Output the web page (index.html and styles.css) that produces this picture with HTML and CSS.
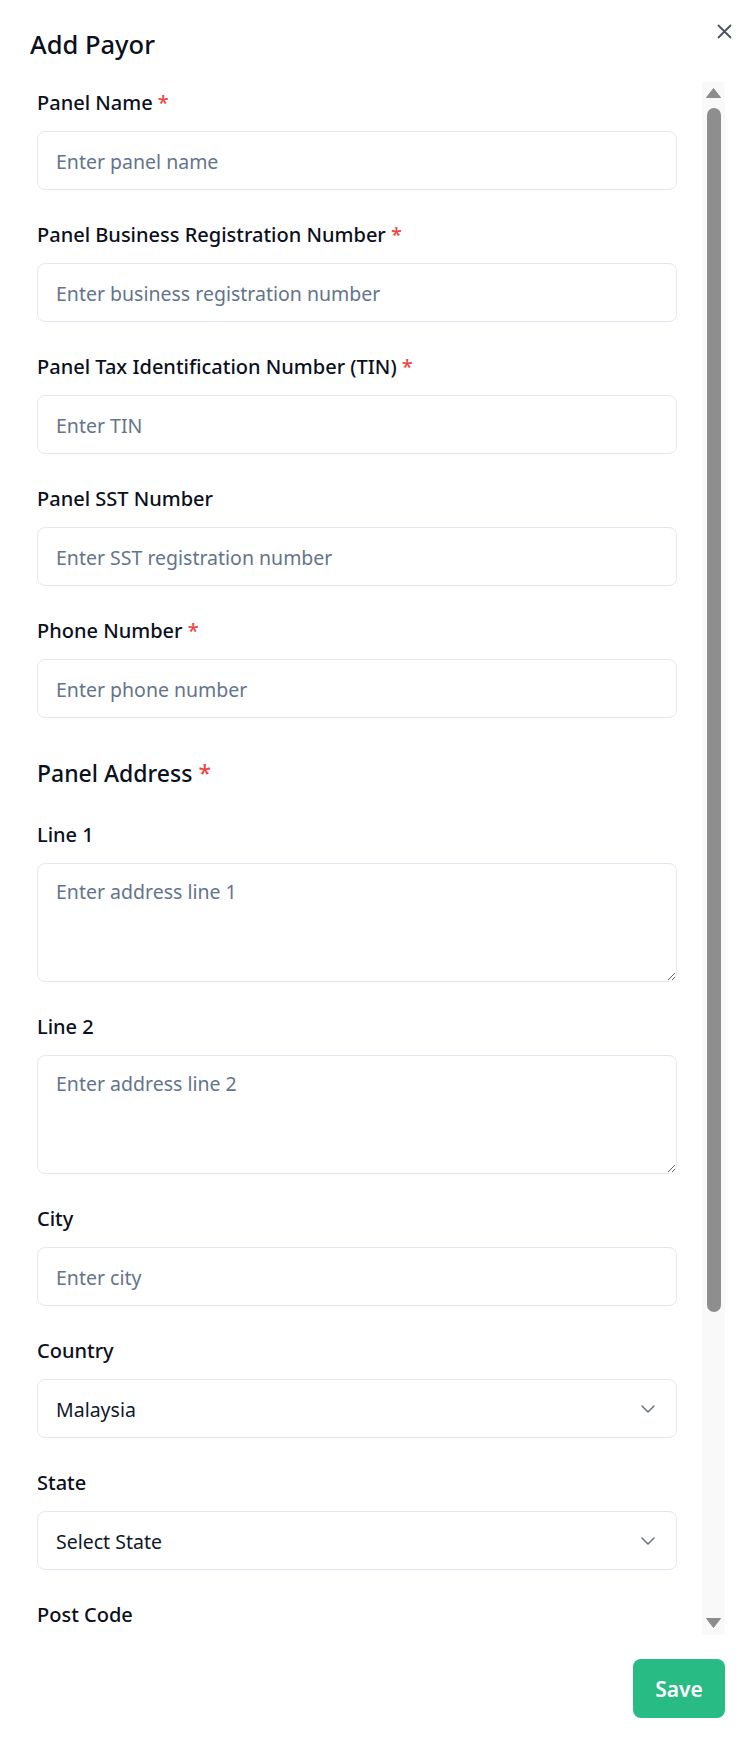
FILE: index.html
```html
<!DOCTYPE html>
<html lang="en">
<head>
<meta charset="utf-8">
<title>Add Payor</title>
<link rel="stylesheet" href="styles.css">
</head>
<body>
<div class="dialog">
  <div class="dialog-header">
    <h2 class="dialog-title">Add Payor</h2>
    <button class="close-btn" type="button" aria-label="Close">
      <svg width="15" height="15" viewBox="0 0 15 15"><path d="M1.5 1.5 L13.5 13.5 M13.5 1.5 L1.5 13.5" stroke="#4b5160" stroke-width="1.8" stroke-linecap="round" fill="none"/></svg>
    </button>
  </div>

  <div class="dialog-body">
    <form class="form">
      <div class="field">
        <label class="label">Panel Name <span class="req">*</span></label>
        <input class="input" type="text" placeholder="Enter panel name">
      </div>
      <div class="field">
        <label class="label">Panel Business Registration Number <span class="req">*</span></label>
        <input class="input" type="text" placeholder="Enter business registration number">
      </div>
      <div class="field">
        <label class="label">Panel Tax Identification Number (TIN) <span class="req">*</span></label>
        <input class="input" type="text" placeholder="Enter TIN">
      </div>
      <div class="field">
        <label class="label">Panel SST Number</label>
        <input class="input" type="text" placeholder="Enter SST registration number">
      </div>
      <div class="field">
        <label class="label">Phone Number <span class="req">*</span></label>
        <input class="input" type="text" placeholder="Enter phone number">
      </div>

      <div class="section">
        <h3 class="section-title">Panel Address <span class="req">*</span></h3>
        <div class="field">
          <label class="label">Line 1</label>
          <textarea class="textarea" placeholder="Enter address line 1"></textarea>
        </div>
        <div class="field">
          <label class="label">Line 2</label>
          <textarea class="textarea" placeholder="Enter address line 2"></textarea>
        </div>
        <div class="field">
          <label class="label">City</label>
          <input class="input" type="text" placeholder="Enter city">
        </div>
        <div class="field">
          <label class="label">Country</label>
          <div class="select-wrap">
            <select class="select"><option>Malaysia</option></select>
            <svg class="chevron" width="14" height="8" viewBox="0 0 14 8"><path d="M1 1 L7 7 L13 1" stroke="#6b7280" stroke-width="1.5" fill="none" stroke-linecap="round" stroke-linejoin="round"/></svg>
          </div>
        </div>
        <div class="field">
          <label class="label">State</label>
          <div class="select-wrap">
            <select class="select"><option>Select State</option></select>
            <svg class="chevron" width="14" height="8" viewBox="0 0 14 8"><path d="M1 1 L7 7 L13 1" stroke="#6b7280" stroke-width="1.5" fill="none" stroke-linecap="round" stroke-linejoin="round"/></svg>
          </div>
        </div>
        <div class="field">
          <label class="label">Post Code</label>
          <input class="input" type="text" placeholder="Enter post code">
        </div>
      </div>
    </form>

    <div class="scrollbar" aria-hidden="true">
      <svg class="sb-arrow sb-up" width="15" height="10" viewBox="0 0 15 10"><path d="M7.5 0.5 L14.5 9.5 L0.5 9.5 Z" fill="#8c8c8c" stroke="#8c8c8c" stroke-linejoin="round"/></svg>
      <div class="sb-thumb"></div>
      <div class="sb-space"></div>
      <svg class="sb-arrow sb-down" width="15" height="10" viewBox="0 0 15 10"><path d="M0.5 0.5 L14.5 0.5 L7.5 9.5 Z" fill="#8c8c8c" stroke="#8c8c8c" stroke-linejoin="round"/></svg>
    </div>
  </div>

  <div class="dialog-footer">
    <button class="save-btn" type="button">Save</button>
  </div>
</div>
</body>
</html>
```

FILE: styles.css
```css
* { box-sizing: border-box; }

html, body {
  margin: 0;
  padding: 0;
  background: #ffffff;
}

body {
  font-family: "Noto Sans", "Open Sans", "Liberation Sans", sans-serif;
  color: #0f172a;
}

.dialog {
  width: 750px;
  height: 1743px;
  display: flex;
  flex-direction: column;
}

.dialog-header {
  height: 82px;
  display: flex;
  justify-content: space-between;
  align-items: flex-start;
  padding: 0 18px 0 30px;
}

.dialog-title {
  margin: 26px 0 0;
  font-size: 25.5px;
  line-height: 36px;
  font-weight: 500;
  color: #0b1020;
}

.close-btn {
  margin-top: 24px;
  padding: 0;
  border: 0;
  background: none;
  width: 15px;
  height: 15px;
  display: block;
}
.close-btn svg { display: block; }

.dialog-body {
  height: 1553px;
  display: flex;
  padding: 0 25px 0 37px;
  gap: 25px;
}

.form {
  flex: 1;
  min-width: 0;
  overflow: hidden;
  padding-top: 7px;
  display: flex;
  flex-direction: column;
  gap: 31px;
}

.section {
  margin-top: 8px;
  display: flex;
  flex-direction: column;
  gap: 31px;
}

.section-title {
  margin: 0 0 1px;
  font-size: 23px;
  line-height: 32px;
  font-weight: 500;
  color: #0b1020;
}

.field {
  display: flex;
  flex-direction: column;
}

.label {
  font-size: 20px;
  line-height: 28px;
  font-weight: 500;
  color: #0b1020;
  margin-bottom: 14px;
}

.req { color: #ef4444; }

.input,
.textarea,
.select {
  width: 100%;
  border: 1px solid #e2e8f0;
  border-radius: 8px;
  background: #ffffff;
  font-family: inherit;
  font-size: 19.5px;
  color: #0f172a;
  outline: none;
  margin: 0;
}

.input {
  height: 59px;
  padding: 2px 18px 0;
  flex-shrink: 0;
}

.textarea {
  height: 119px;
  padding: 14px 18px 12px;
  line-height: 28px;
  resize: vertical;
  flex-shrink: 0;
}

.input::placeholder,
.textarea::placeholder {
  color: #64748b;
  opacity: 1;
}

.select-wrap {
  position: relative;
  flex-shrink: 0;
}

.select {
  height: 59px;
  padding: 2px 18px 0;
  appearance: none;
  -webkit-appearance: none;
  display: block;
}

.chevron {
  position: absolute;
  right: 22px;
  top: 26px;
  pointer-events: none;
}

.scrollbar {
  width: 23px;
  flex-shrink: 0;
  background: #f9f9f9;
  display: flex;
  flex-direction: column;
  align-items: center;
}

.sb-arrow { display: block; flex-shrink: 0; }
.sb-up { margin-top: 6px; }
.sb-down { margin-bottom: 7px; }

.sb-thumb {
  margin-top: 10px;
  width: 14px;
  height: 1204px;
  border-radius: 7px;
  background: #8e8e8e;
  flex-shrink: 0;
}

.sb-space { flex: 1; }

.dialog-footer {
  display: flex;
  justify-content: flex-end;
  padding: 24px 25px 0 0;
}

.save-btn {
  width: 92px;
  height: 59px;
  border: 0;
  border-radius: 8px;
  background: #29bb84;
  color: #ffffff;
  font-family: inherit;
  font-size: 21px;
  font-weight: 600;
  padding: 0;
}
```
